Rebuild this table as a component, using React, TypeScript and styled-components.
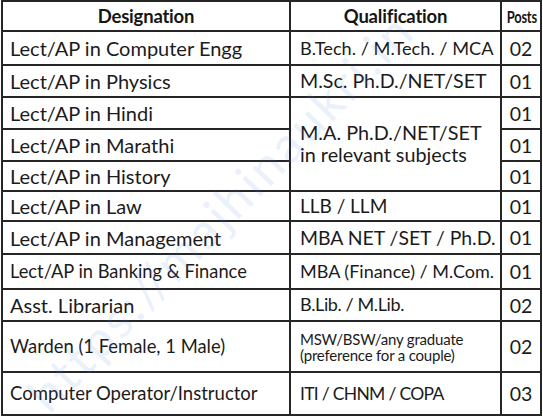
import React from 'react';
import styled, { createGlobalStyle } from 'styled-components';

const GlobalStyle = createGlobalStyle`
  html, body {
    margin: 0;
    padding: 0;
    background: #ffffff;
  }
  body {
    font-family: Lato, 'Liberation Sans', sans-serif;
    color: #1b1b1b;
  }
`;

const Page = styled.div`
  position: relative;
  width: 543px;
  height: 417px;
  overflow: hidden;
  background: #ffffff;
`;

const Table = styled.table`
  border-collapse: collapse;
  width: 541px;
  margin: 0 0 0 1px;
  border: 2px solid #262626;
  table-layout: fixed;
`;

const Row = styled.tr<{ $h: number }>`
  height: ${(p) => p.$h}px;
`;

const HeadCell = styled.th`
  border: 2px solid #262626;
  font-weight: 700;
  font-size: 18.5px;
  letter-spacing: -0.2px;
  text-align: center;
  padding: 0;
  color: #161616;
  overflow: hidden;
`;

const Narrow = styled.span`
  display: inline-block;
  font-size: 17px;
  letter-spacing: -0.3px;
  transform: scaleX(0.76);
  transform-origin: center;
`;

const Cell = styled.td<{ $size?: number; $ls?: number }>`
  border: 2px solid #262626;
  font-size: ${(p) => p.$size ?? 20}px;
  letter-spacing: ${(p) => p.$ls ?? 0}px;
  padding: 0 0 0 7px;
  vertical-align: middle;
  white-space: nowrap;
  line-height: 1.1;
  overflow: hidden;
`;

const QualCell = styled(Cell)`
  padding-left: 9px;
`;

const SmallLines = styled.div`
  font-size: 15px;
  line-height: 16px;
  letter-spacing: -0.2px;
`;

const PostCell = styled.td`
  border: 2px solid #262626;
  font-size: 19.5px;
  text-align: center;
  padding: 0;
  vertical-align: middle;
`;

const Watermark = styled.div`
  position: absolute;
  left: 36px;
  top: 372px;
  transform: rotate(-46deg);
  transform-origin: left center;
  font-size: 50px;
  font-family: Lato, sans-serif;
  color: #4f86d8;
  opacity: 0.11;
  white-space: nowrap;
  pointer-events: none;
  letter-spacing: 3px;
`;

type Post = {
  designation: string;
  qualification?: React.ReactNode;
  span?: number;
  posts: string;
  h: number;
  dSize?: number;
  qSize?: number;
  qLs?: number;
};

const posts: Post[] = [
  { designation: 'Lect/AP in Computer Engg', qualification: 'B.Tech. / M.Tech. / MCA', posts: '02', h: 34, qSize: 18.2 },
  { designation: 'Lect/AP in Physics', qualification: 'M.Sc. Ph.D./NET/SET', posts: '01', h: 32, qSize: 19.6 },
  {
    designation: 'Lect/AP in Hindi',
    qualification: (
      <>
        M.A. Ph.D./NET/SET
        <br />
        in relevant subjects
      </>
    ),
    span: 3,
    posts: '01',
    h: 32,
    qSize: 19.8,
  },
  { designation: 'Lect/AP in Marathi', posts: '01', h: 32 },
  { designation: 'Lect/AP in History', posts: '01', h: 30 },
  { designation: 'Lect/AP in Law', qualification: 'LLB / LLM', posts: '01', h: 30, qSize: 19 },
  { designation: 'Lect/AP in Management', qualification: 'MBA NET /SET / Ph.D.', posts: '01', h: 33, qSize: 19.4 },
  {
    designation: 'Lect/AP in Banking & Finance',
    qualification: 'MBA (Finance) / M.Com.',
    posts: '01',
    h: 35,
    dSize: 18.3,
    qSize: 18,
  },
  { designation: 'Asst. Librarian', qualification: 'B.Lib. / M.Lib.', posts: '02', h: 32, qSize: 18, qLs: -0.4 },
  {
    designation: 'Warden (1 Female, 1 Male)',
    qualification: (
      <SmallLines>
        MSW/BSW/any graduate
        <br />
        (preference for a couple)
      </SmallLines>
    ),
    posts: '02',
    h: 51,
    dSize: 18.4,
  },
  {
    designation: 'Computer Operator/Instructor',
    qualification: 'ITI / CHNM / COPA',
    posts: '03',
    h: 43,
    dSize: 18.5,
    qSize: 17.5,
    qLs: -0.7,
  },
];

export default function App() {
  return (
    <Page>
      <GlobalStyle />
      <Table>
        <colgroup>
          <col style={{ width: 288 }} />
          <col style={{ width: 211 }} />
          <col />
        </colgroup>
        <thead>
          <Row $h={30}>
            <HeadCell>Designation</HeadCell>
            <HeadCell>Qualification</HeadCell>
            <HeadCell>
              <Narrow>Posts</Narrow>
            </HeadCell>
          </Row>
        </thead>
        <tbody>
          {posts.map((p) => (
            <Row key={p.designation} $h={p.h}>
              <Cell $size={p.dSize}>{p.designation}</Cell>
              {p.qualification !== undefined && (
                <QualCell rowSpan={p.span} $size={p.qSize} $ls={p.qLs}>
                  {p.qualification}
                </QualCell>
              )}
              <PostCell>{p.posts}</PostCell>
            </Row>
          ))}
        </tbody>
      </Table>
      <Watermark>https://majhinaukri.in</Watermark>
    </Page>
  );
}
